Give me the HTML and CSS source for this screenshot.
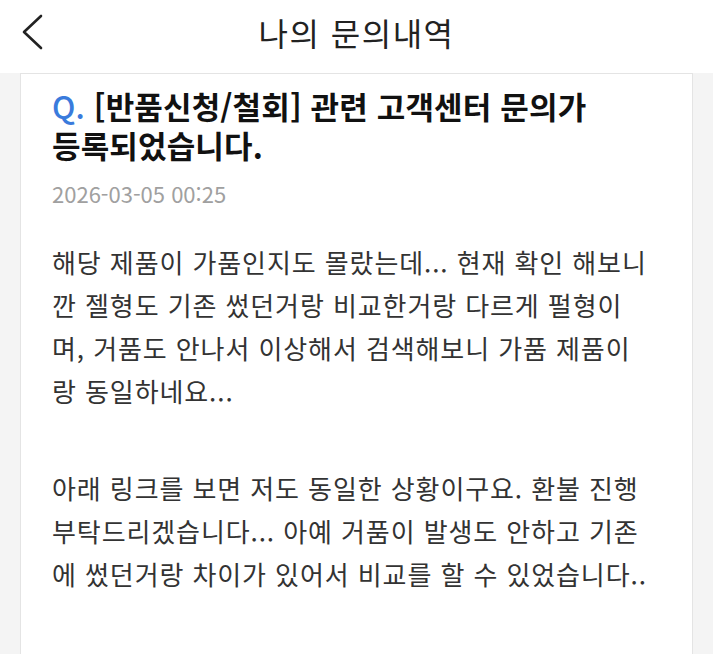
FILE: index.html
```html
<!DOCTYPE html>
<html lang="ko">
<head>
<meta charset="utf-8">
<link rel="stylesheet" href="styles.css">
</head>
<body>
<div class="page">
  <header class="topbar">
    <span class="back">
      <svg width="24" height="36" viewBox="0 0 24 36"><path d="M21 2 L4 18 L21 34" fill="none" stroke="#222" stroke-width="2.6" stroke-linecap="round" stroke-linejoin="round"/></svg>
    </span>
    <h1 class="title">나의 문의내역</h1>
  </header>
  <main class="content">
    <section class="card">
      <h2 class="q-title"><span class="tline"><span class="q">Q.</span> [반품신청/철회] 관련 고객센터 문의가</span><span class="tline">등록되었습니다.</span></h2>
      <div class="date">2026-03-05 00:25</div>
      <div class="body">
        <p class="para"><span class="line">해당 제품이 가품인지도 몰랐는데... 현재 확인 해보니</span><span class="line">깐 젤형도 기존 썼던거랑 비교한거랑 다르게 펄형이</span><span class="line">며, 거품도 안나서 이상해서 검색해보니 가품 제품이</span><span class="line">랑 동일하네요...</span></p>
        <p class="para"><span class="line">아래 링크를 보면 저도 동일한 상황이구요. 환불 진행</span><span class="line">부탁드리겠습니다... 아예 거품이 발생도 안하고 기존</span><span class="line">에 썼던거랑 차이가 있어서 비교를 할 수 있었습니다..</span></p>
      </div>
    </section>
  </main>
</div>
</body>
</html>
```
FILE: styles.css
```css
* { box-sizing: border-box; }
html, body { margin: 0; padding: 0; }
body {
  width: 713px;
  height: 654px;
  overflow: hidden;
  background: #f4f4f4;
  font-family: "Noto Sans CJK KR", "Noto Sans", sans-serif;
}
.page { display: flex; flex-direction: column; height: 654px; }
.topbar {
  height: 73px;
  background: #fff;
  position: relative;
  display: flex;
  align-items: center;
  justify-content: center;
  flex-shrink: 0;
}
.back {
  position: absolute;
  left: 20px;
  top: 14px;
  display: flex;
}
.title {
  margin: 0;
  font-size: 32px;
  font-weight: 400;
  color: #222;
  letter-spacing: 1.5px;
  line-height: 1;
  margin-top: -10px;
}
.content {
  flex: 1;
  padding: 0 20px 0 20px;
  display: flex;
}
.card {
  flex: 1;
  background: #fff;
  border: 1px solid #e4e4e4;
  border-bottom: none;
  padding: 12px 31px 0 31px;
}
.q-title {
  margin: 0;
  font-size: 31px;
  font-weight: 700;
  line-height: 39px;
  letter-spacing: 0.15px;
  color: #111;
}
.tline { display: block; white-space: nowrap; }
.q { color: #3a7bdc; font-weight: 500; }
.date {
  margin-top: 15px;
  font-size: 22px;
  color: #a0a0a0;
  line-height: 28px;
}
.body {
  margin-top: 33px;
  font-size: 26px;
  line-height: 43px;
  letter-spacing: 0.9px;
  color: #333;
}
.para { margin: 0 0 54px 0; }
.line { display: block; white-space: nowrap; }
```
